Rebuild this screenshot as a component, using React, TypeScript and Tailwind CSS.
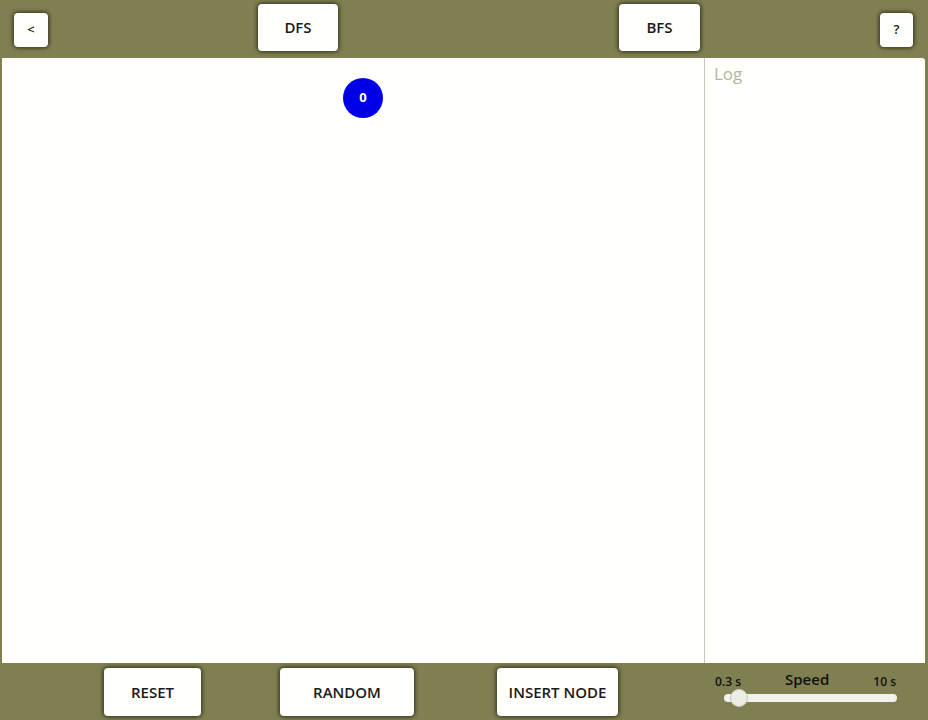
import React, { useState } from 'react'

const font = { fontFamily: '"Open Sans", "Noto Sans", Arial, sans-serif' }

function Btn({ label, className }: { label: string; className: string }) {
  return (
    <button
      type="button"
      className={`flex items-center justify-center rounded-[4px] bg-[#fffffb] font-semibold text-[#1a1a1a] shadow-[0_0_4px_1px_rgba(20,20,10,0.75)] ${className}`}
    >
      {label}
    </button>
  )
}

export default function App() {
  const [speed, setSpeed] = useState(0.3)

  return (
    <div className="flex h-[720px] w-[928px] flex-col bg-[#807f52]" style={font}>
      <div className="flex h-[58px] items-start">
        <Btn label="<" className="ml-[14px] mt-[13px] h-[34px] w-[34px] text-[13px]" />
        <Btn label="DFS" className="ml-[210px] mt-[4px] h-[47px] w-[80px] text-[15px]" />
        <Btn label="BFS" className="ml-[281px] mt-[4px] h-[47px] w-[81px] text-[15px]" />
        <Btn label="?" className="ml-auto mr-[15px] mt-[13px] h-[34px] w-[33px] text-[13px]" />
      </div>

      <div className="ml-[2px] mr-[3px] flex h-[605px]">
        <div className="relative w-[702px] bg-[#fffffb]">
          <div className="absolute left-[341px] top-[20px] flex h-[40px] w-[40px] items-center justify-center rounded-full bg-[#0000e6] text-[13px] font-bold text-white">
            0
          </div>
        </div>
        <div className="flex-1 rounded-tr-[3px] border-l border-[#c8c8c0] bg-[#fffffb] px-[9px] pt-[3px]">
          <div className="text-[17px] text-[#b4b4a4]">Log</div>
        </div>
      </div>

      <div className="relative flex flex-1 items-start">
        <Btn label="RESET" className="ml-[104px] mt-[5px] h-[48px] w-[97px] text-[15px]" />
        <Btn label="RANDOM" className="ml-[79px] mt-[5px] h-[48px] w-[134px] text-[15px]" />
        <Btn label="INSERT NODE" className="ml-[83px] mt-[5px] h-[48px] w-[121px] text-[15px]" />
        <div className="ml-[97px] mt-[5px] w-[182px] text-[#111]">
          <div className="flex items-end justify-between">
            <span className="text-[12px] font-semibold">0.3 s</span>
            <span className="text-[15px] font-semibold">Speed</span>
            <span className="mr-[1px] text-[12px] font-semibold">10 s</span>
          </div>
          <div className="relative ml-[9px] mt-[3px] h-[8px] w-[173px] rounded-full bg-[#f2f2ec]">
            <div className="absolute left-[6px] top-[-5px] h-[18px] w-[18px] rounded-full border border-[#c8c8c0] bg-[#ececE4]" />
          </div>
          <input
            type="range"
            min={0.3}
            max={10}
            step={0.1}
            value={speed}
            onChange={(e) => setSpeed(Number(e.target.value))}
            className="hidden"
          />
        </div>
      </div>
    </div>
  )
}
